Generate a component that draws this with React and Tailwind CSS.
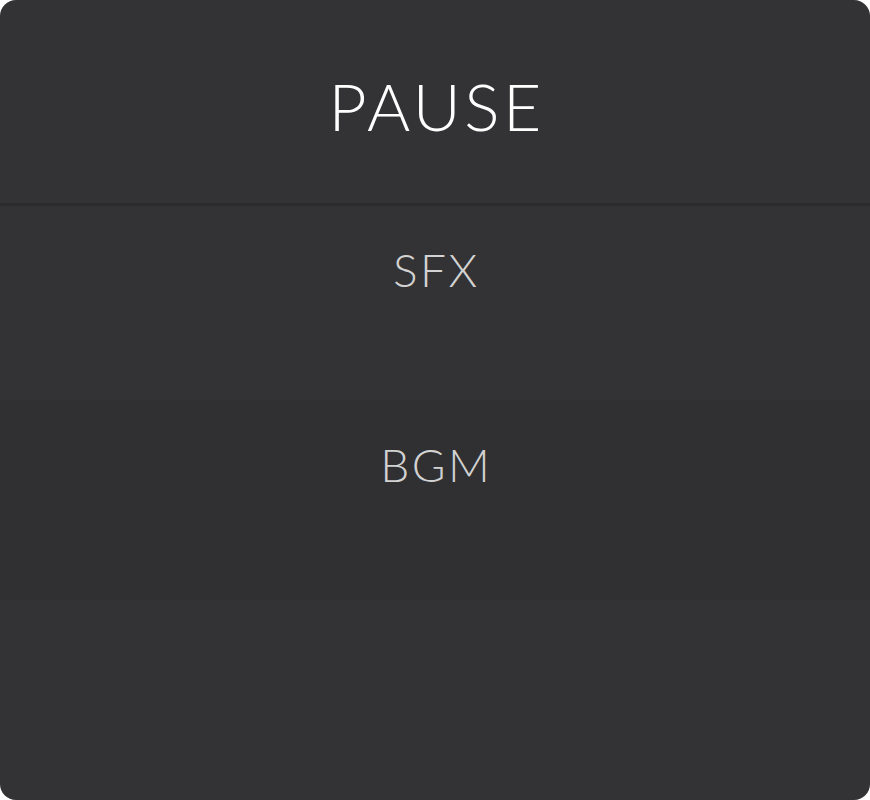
export default function App() {
  return (
    <div className="w-[870px] h-[800px] bg-white">
      <div className="w-[870px] h-[800px] rounded-[16px] overflow-hidden bg-[#333335] flex flex-col font-['Lato','Open_Sans',sans-serif] font-light">
        <div className="h-[206px] flex items-start justify-center pt-[66px] border-b-[3px] border-[#2b2b2d]">
          <span className="text-[66px] leading-[80px] text-white tracking-[3.5px] pl-[3.5px]">PAUSE</span>
        </div>
        <div className="h-[194px] flex justify-center pt-[35px]">
          <span className="text-[46px] leading-[58px] text-[#d2d2d2] tracking-[2.5px] pl-[2.5px]">SFX</span>
        </div>
        <div className="h-[200px] bg-[#303032] flex justify-center pt-[36px]">
          <span className="text-[46px] leading-[58px] text-[#d2d2d2] tracking-[2.5px] pl-[2.5px]">BGM</span>
        </div>
        <div className="flex-1" />
      </div>
    </div>
  );
}
